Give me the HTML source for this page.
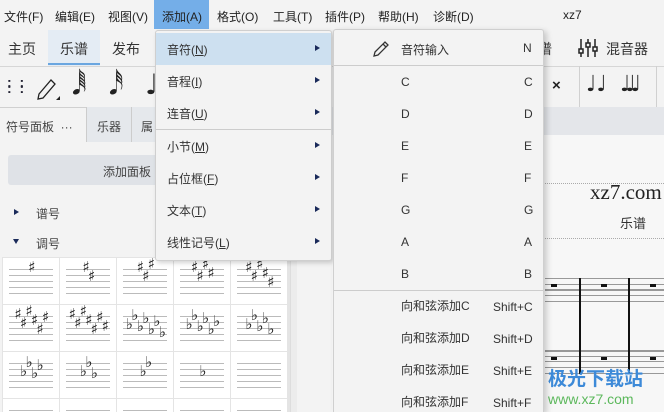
<!DOCTYPE html>
<html><head><meta charset="utf-8"><style>
*{margin:0;padding:0;box-sizing:border-box}
html,body{width:664px;height:412px;overflow:hidden}
body{background:#f3f3f3;position:relative;font-family:"Liberation Sans","Noto Sans CJK SC",sans-serif;color:#222}
.a{position:absolute;white-space:nowrap}
.mb{font-size:12px;top:8px}
.t{font-size:14px;top:39px;color:#333}
.mi{font-size:12px;color:#333}
.ar{position:absolute;width:0;height:0;border-left:5px solid #1a2a5a;border-top:3.5px solid transparent;border-bottom:3.5px solid transparent}
.hl{position:absolute;height:1px;background:#999}
.cell{position:absolute;width:56px;height:46px;background:#fff;overflow:hidden}
.cell i{position:absolute;left:6px;right:6px;height:1px;background:#bbb}
.k{position:absolute;font-size:15px;color:#222;font-family:"DejaVu Sans",sans-serif;line-height:15px}
</style></head><body>
<div class="a" style="left:154px;top:0;width:55px;height:29px;background:#74aee8"></div>
<div class="a mb" style="left:4px">文件(F)</div>
<div class="a mb" style="left:55px">编辑(E)</div>
<div class="a mb" style="left:108px">视图(V)</div>
<div class="a mb" style="left:162px">添加(A)</div>
<div class="a mb" style="left:217px">格式(O)</div>
<div class="a mb" style="left:273px">工具(T)</div>
<div class="a mb" style="left:325px">插件(P)</div>
<div class="a mb" style="left:378px">帮助(H)</div>
<div class="a mb" style="left:433px">诊断(D)</div>
<div class="a mb" style="left:563px">xz7</div>
<div class="a" style="left:48px;top:30px;width:52px;height:36px;background:#e4ecf4"></div>
<div class="a" style="left:48px;top:63px;width:52px;height:2px;background:#6aa6e0"></div>
<div class="a" style="left:0;top:66px;width:664px;height:1px;background:#d6d6d6"></div>
<div class="a t" style="left:8px">主页</div>
<div class="a t" style="left:60px">乐谱</div>
<div class="a t" style="left:112px">发布</div>
<div class="a t" style="left:538px">谱</div>
<svg class="a" style="left:578px;top:38px" width="22" height="20"><g stroke="#222" stroke-width="1.5" fill="none"><line x1="3" y1="1" x2="3" y2="19"/><line x1="10" y1="1" x2="10" y2="19"/><line x1="17" y1="1" x2="17" y2="19"/><rect x="1" y="11" width="4" height="4" fill="#f3f3f3"/><rect x="8" y="5" width="4" height="4" fill="#f3f3f3"/><rect x="15" y="9" width="4" height="4" fill="#f3f3f3"/></g></svg>
<div class="a t" style="left:606px">混音器</div>
<div class="a" style="left:7px;top:79px;font-size:14px;font-weight:bold;line-height:6px;letter-spacing:2px;color:#223">: :<br>: :</div>
<svg class="a" style="left:36px;top:74px" width="26" height="30"><path d="M3 20 L15 6 L19 10 L7 24 L2 25 Z" fill="none" stroke="#222" stroke-width="1.3"/><path d="M20 26 l4 0 l0 -4z" fill="#222"/></svg>
<div class="a" style="left:72px;top:68px;font-size:28px;font-family:'DejaVu Sans',sans-serif">𝅘𝅥𝅱</div>
<div class="a" style="left:109px;top:68px;font-size:28px;font-family:'DejaVu Sans',sans-serif">𝅘𝅥𝅰</div>
<div class="a" style="left:145px;top:68px;font-size:28px;font-family:'DejaVu Sans',sans-serif">♩</div>
<div class="a" style="left:552px;top:77px;font-size:15px;font-weight:bold">×</div>
<div class="a" style="left:579px;top:66px;width:1px;height:41px;background:#d0d0d0"></div>
<div class="a" style="left:586px;top:72px;font-size:22px;font-family:'DejaVu Sans',sans-serif">♩♩</div>
<div class="a" style="left:620px;top:72px;font-size:22px;font-family:'DejaVu Sans',sans-serif;letter-spacing:-5px">♩♩♩</div>
<div class="a" style="left:656px;top:66px;width:1px;height:41px;background:#d0d0d0"></div>
<div class="a" style="left:0;top:107px;width:664px;height:1px;background:#d0d0d0"></div>
<div class="a" style="left:86px;top:107px;width:80px;height:35px;background:#e5e8ec;border-left:1px solid #ccc"></div>
<div class="a" style="left:131px;top:107px;width:1px;height:35px;background:#ccc"></div>
<div class="a" style="left:6px;top:118px;font-size:12px;color:#444">符号面板 &nbsp;···</div>
<div class="a" style="left:97px;top:118px;font-size:12px;color:#444">乐器</div>
<div class="a" style="left:141px;top:118px;font-size:12px;color:#444">属</div>
<div class="a" style="left:332px;top:107px;width:332px;height:28px;background:#e4e6ea"></div>
<div class="a" style="left:332px;top:135px;width:332px;height:277px;background:#f7f7f7"></div>
<div class="a" style="left:290px;top:142px;width:7px;height:270px;background:#ececec;border-left:1px solid #ddd"></div>
<div class="a" style="left:8px;top:155px;width:280px;height:30px;background:#dfe2e7;border-radius:3px"></div>
<div class="a" style="left:103px;top:163px;font-size:12px;color:#444">添加面板</div>
<div class="ar" style="left:14px;top:209px"></div>
<div class="a" style="left:36px;top:205px;font-size:12px;color:#444">谱号</div>
<div class="a" style="left:13px;top:239px;border-top:5px solid #1a2a5a;border-left:3.5px solid transparent;border-right:3.5px solid transparent"></div>
<div class="a" style="left:36px;top:235px;font-size:12px;color:#444">调号</div>
<div class="a" style="left:2px;top:257px;width:288px;height:155px;background:#e4e4e4"></div>
<div id="grid"></div>
<div class="a" style="left:545px;top:183px;width:119px;border-top:1px dotted #aaa"></div>
<div class="a" style="left:590px;top:180px;width:74px;overflow:hidden;font-size:21px;font-family:'Liberation Serif',serif">xz7.com</div>
<div class="a" style="left:620px;top:213px;font-size:13px;color:#333">乐谱</div>
<div class="a" style="left:545px;top:238px;width:119px;border-top:1px dotted #aaa"></div>
<div class="hl" style="left:545px;top:278px;width:119px"></div><div class="hl" style="left:545px;top:284px;width:119px"></div><div class="hl" style="left:545px;top:289px;width:119px;height:2px"></div><div class="hl" style="left:545px;top:295px;width:119px"></div><div class="hl" style="left:545px;top:301px;width:119px"></div>
<div class="hl" style="left:545px;top:350px;width:119px;height:2px"></div><div class="hl" style="left:545px;top:356px;width:119px"></div><div class="hl" style="left:545px;top:361px;width:119px"></div><div class="hl" style="left:545px;top:367px;width:119px"></div><div class="hl" style="left:545px;top:373px;width:119px"></div>
<div class="a" style="left:579px;top:278px;width:1.5px;height:96px;background:#111"></div>
<div class="a" style="left:628px;top:278px;width:1.5px;height:96px;background:#111"></div>
<div class="a" style="left:551px;top:284px;width:6px;height:3px;background:#111"></div><div class="a" style="left:601px;top:284px;width:6px;height:3px;background:#111"></div><div class="a" style="left:650px;top:284px;width:6px;height:3px;background:#111"></div>
<div class="a" style="left:551px;top:357px;width:6px;height:3px;background:#111"></div><div class="a" style="left:601px;top:357px;width:6px;height:3px;background:#111"></div><div class="a" style="left:650px;top:357px;width:6px;height:3px;background:#111"></div>
<div class="a" style="left:548px;top:364px;font-size:19px;font-weight:bold;color:#3d8ad8">极光下载站</div>
<div class="a" style="left:548px;top:391px;font-size:14px;color:#5cb85c">www.xz7.com</div>
<div class="a" style="left:155px;top:30px;width:177px;height:231px;background:#f3f3f3;border:1px solid #cfcfcf;border-radius:3px;box-shadow:2px 2px 5px rgba(0,0,0,.18)"></div>
<div class="a" style="left:156px;top:33px;width:175px;height:32px;background:#cde0f0"></div>
<div class="a" style="left:156px;top:129px;width:175px;height:1px;background:#ccc"></div>
<div class="a mi" style="left:167px;top:41px">音符(<u>N</u>)</div>
<div class="a mi" style="left:167px;top:73px">音程(<u>I</u>)</div>
<div class="a mi" style="left:167px;top:105px">连音(<u>U</u>)</div>
<div class="a mi" style="left:167px;top:138px">小节(<u>M</u>)</div>
<div class="a mi" style="left:167px;top:170px">占位框(<u>F</u>)</div>
<div class="a mi" style="left:167px;top:202px">文本(<u>T</u>)</div>
<div class="a mi" style="left:167px;top:234px">线性记号(<u>L</u>)</div>
<div class="ar" style="left:315px;top:45px"></div><div class="ar" style="left:315px;top:77px"></div><div class="ar" style="left:315px;top:109px"></div><div class="ar" style="left:315px;top:142px"></div><div class="ar" style="left:315px;top:174px"></div><div class="ar" style="left:315px;top:206px"></div><div class="ar" style="left:315px;top:238px"></div>
<div class="a" style="left:333px;top:29px;width:211px;height:383px;background:#f3f3f3;border:1px solid #cfcfcf;border-bottom:none;border-radius:3px 3px 0 0;box-shadow:3px 2px 6px rgba(0,0,0,.18)"></div>
<div class="a" style="left:334px;top:65px;width:209px;height:1px;background:#ccc"></div>
<div class="a" style="left:334px;top:290px;width:209px;height:1px;background:#ccc"></div>
<svg class="a" style="left:372px;top:40px" width="18" height="18"><path d="M2 16 L3 12 L13 2 L16 5 L6 15 Z M11 4 L14 7" fill="none" stroke="#333" stroke-width="1.3"/></svg>
<div class="a mi" style="left:401px;top:41px">音符输入</div>
<div class="a mi" style="left:523px;top:41px">N</div>
<div id="notes"></div>
<script>
var n=document.getElementById('notes'),h='';
'CDEFGAB'.split('').forEach(function(c,i){var y=75+i*32;h+='<div class="a mi" style="left:401px;top:'+y+'px">'+c+'</div><div class="a mi" style="left:524px;top:'+y+'px">'+c+'</div>';});
'CDEF'.split('').forEach(function(c,i){var y=299+i*32;h+='<div class="a mi" style="left:401px;top:'+y+'px;line-height:14px;height:14px">向和弦添加'+c+'</div><div class="a mi" style="left:493px;top:'+(y+1)+'px;line-height:14px;height:14px">Shift+'+c+'</div>';});
n.innerHTML=h;
var g=document.getElementById('grid'),s='';
var sy=[2,11,-1,8,17,5,14], fy=[12,3,14,6,17,9,20];
var keys=[[1,'s'],[2,'s'],[3,'s'],[4,'s'],[5,'s'],[6,'s'],[7,'s'],[7,'f'],[6,'f'],[5,'f'],[4,'f'],[3,'f'],[2,'f'],[1,'f'],[0,'s']];
for(var r=0;r<4;r++)for(var c=0;c<5;c++){var x=3+c*57,y=258+r*47,hh=Math.min(46,412-y);s+='<div class="cell" style="left:'+x+'px;top:'+y+'px;height:'+hh+'px">';if(r<3){for(var l=0;l<5;l++)s+='<i style="top:'+(11+l*6)+'px"></i>';var k=keys[r*5+c],cnt=k[0],w=cnt*5.5,x0=28-w/2;for(var j=0;j<cnt;j++){var yy=(k[1]=='s'?sy[j]:fy[j]);s+='<span class="k" style="left:'+(x0+j*5.5)+'px;top:'+yy+'px">'+(k[1]=='s'?'♯':'♭')+'</span>';}}else s+='<i style="top:11px"></i>';s+='</div>';}
g.innerHTML=s;
</script>
</body></html>
